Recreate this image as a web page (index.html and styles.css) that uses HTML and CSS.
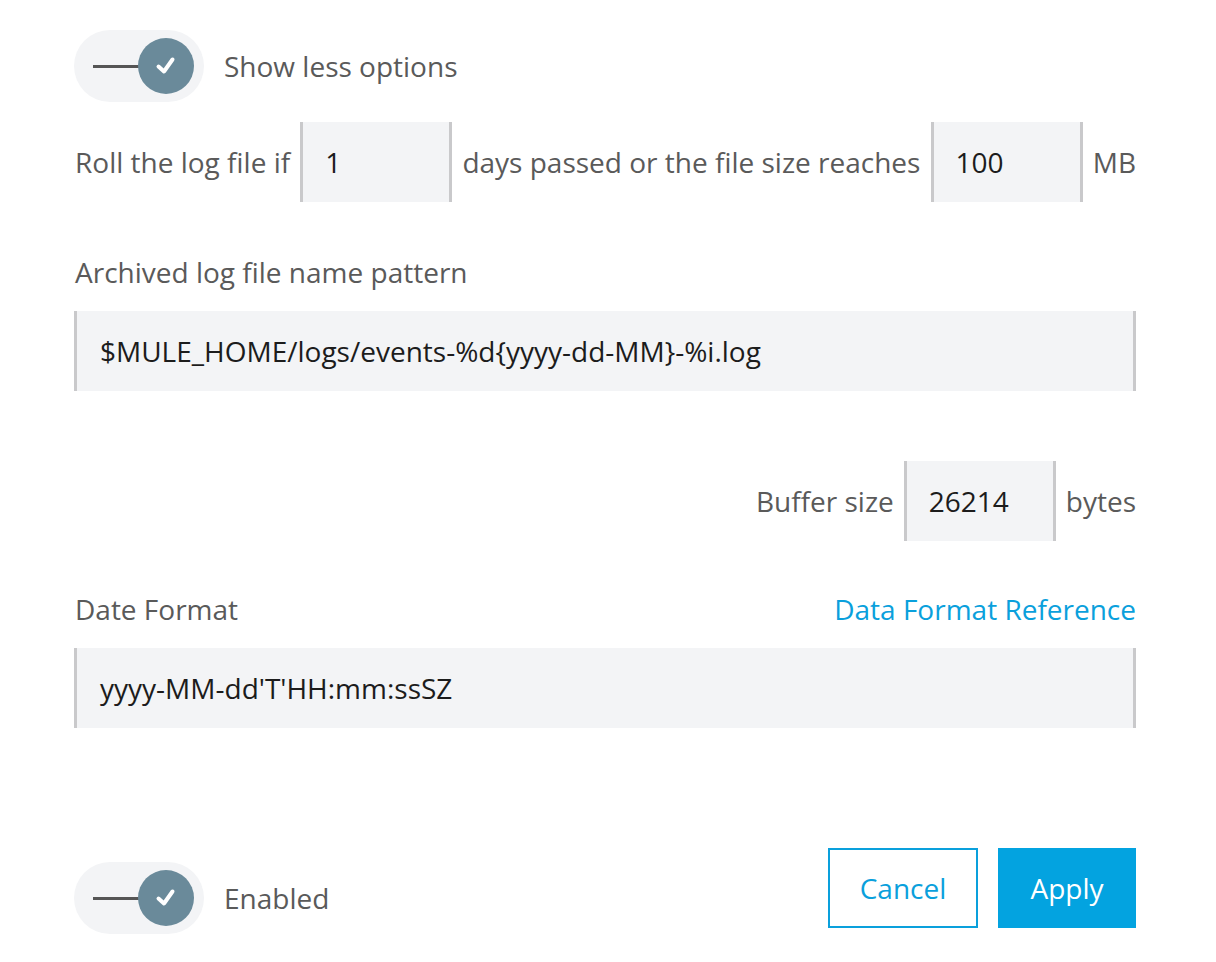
FILE: index.html
```html
<!DOCTYPE html>
<html>
<head>
<meta charset="utf-8">
<link rel="stylesheet" href="styles.css">
</head>
<body>
<div class="form">
  <div class="toggle-row">
    <div class="toggle"><span class="track-line"></span><span class="knob"><svg width="24" height="24" viewBox="0 0 24 24"><path d="M4.5 12.5 L10 17.5 L18.5 5.5" fill="none" stroke="#fff" stroke-width="4" stroke-linecap="round" stroke-linejoin="round"/></svg></span></div>
    <span class="label">Show less options</span>
  </div>

  <div class="inline-row roll-row">
    <span class="label">Roll the log file if</span>
    <div class="field small">1</div>
    <span class="label">days passed or the file size reaches</span>
    <div class="field small">100</div>
    <span class="label">MB</span>
  </div>

  <div class="field-label archived-label">Archived log file name pattern</div>
  <div class="field wide">$MULE_HOME/logs/events-%d{yyyy-dd-MM}-%i.log</div>

  <div class="inline-row buffer-row">
    <span class="label">Buffer size</span>
    <div class="field small">26214</div>
    <span class="label">bytes</span>
  </div>

  <div class="field-label date-label">
    <span>Date Format</span>
    <a class="link" href="#">Data Format Reference</a>
  </div>
  <div class="field wide">yyyy-MM-dd'T'HH:mm:ssSZ</div>

  <div class="footer">
    <div class="toggle-row enabled-row">
      <div class="toggle"><span class="track-line"></span><span class="knob"><svg width="24" height="24" viewBox="0 0 24 24"><path d="M4.5 12.5 L10 17.5 L18.5 5.5" fill="none" stroke="#fff" stroke-width="4" stroke-linecap="round" stroke-linejoin="round"/></svg></span></div>
      <span class="label">Enabled</span>
    </div>
    <div class="buttons">
      <button class="btn btn-cancel">Cancel</button>
      <button class="btn btn-apply">Apply</button>
    </div>
  </div>
</div>
</body>
</html>
```

FILE: styles.css
```css
html, body {
  margin: 0;
  padding: 0;
  background: #ffffff;
}

body {
  font-family: "Open Sans", "Noto Sans", sans-serif;
  font-size: 28px;
  color: #5a5a5a;
}

.form {
  width: 1062px;
  padding: 30px 0 0 74px;
}

.toggle-row {
  display: flex;
  align-items: center;
  gap: 20px;
}

.toggle {
  width: 130px;
  height: 72px;
  box-sizing: border-box;
  border-radius: 36px;
  background: #f3f4f6;
  display: flex;
  align-items: center;
  padding-left: 19px;
}

.track-line {
  width: 46px;
  height: 3px;
  background: #555555;
}

.knob {
  width: 56px;
  height: 56px;
  border-radius: 50%;
  background: #6a8a9a;
  display: flex;
  align-items: center;
  justify-content: center;
  margin-left: -1px;
}

.label {
  line-height: 38px;
  white-space: nowrap;
}

.inline-row {
  display: flex;
  align-items: center;
  gap: 10px;
}

.roll-row {
  margin-top: 20px;
  justify-content: space-between;
  padding-left: 1px;
}

.buffer-row {
  margin-top: 70px;
  justify-content: flex-end;
}

.field {
  box-sizing: border-box;
  height: 80px;
  background: #f3f4f6;
  border-left: 3px solid #c9c9cb;
  border-right: 3px solid #c9c9cb;
  padding-left: 22px;
  display: flex;
  align-items: center;
  color: #1c1c1c;
  white-space: nowrap;
}

.field.small {
  width: 152px;
}

.field.wide {
  width: 1062px;
  margin-top: 20px;
  padding-left: 23px;
}

.field-label {
  line-height: 38px;
  padding-left: 1px;
}

.archived-label {
  margin-top: 51px;
}

.date-label {
  margin-top: 49px;
  display: flex;
  justify-content: space-between;
}

.link {
  color: #0aa0dc;
  text-decoration: none;
}

.footer {
  margin-top: 120px;
  display: flex;
  justify-content: space-between;
  align-items: flex-start;
}

.enabled-row {
  margin-top: 14px;
}

.buttons {
  display: flex;
  gap: 20px;
}

.btn {
  height: 80px;
  font-family: "Open Sans", "Noto Sans", sans-serif;
  font-size: 28px;
  cursor: pointer;
  box-sizing: border-box;
}

.btn-cancel {
  width: 150px;
  background: #ffffff;
  border: 2px solid #0aa0dc;
  color: #0aa0dc;
}

.btn-apply {
  width: 138px;
  background: #03a3e0;
  border: none;
  color: #ffffff;
}
```
